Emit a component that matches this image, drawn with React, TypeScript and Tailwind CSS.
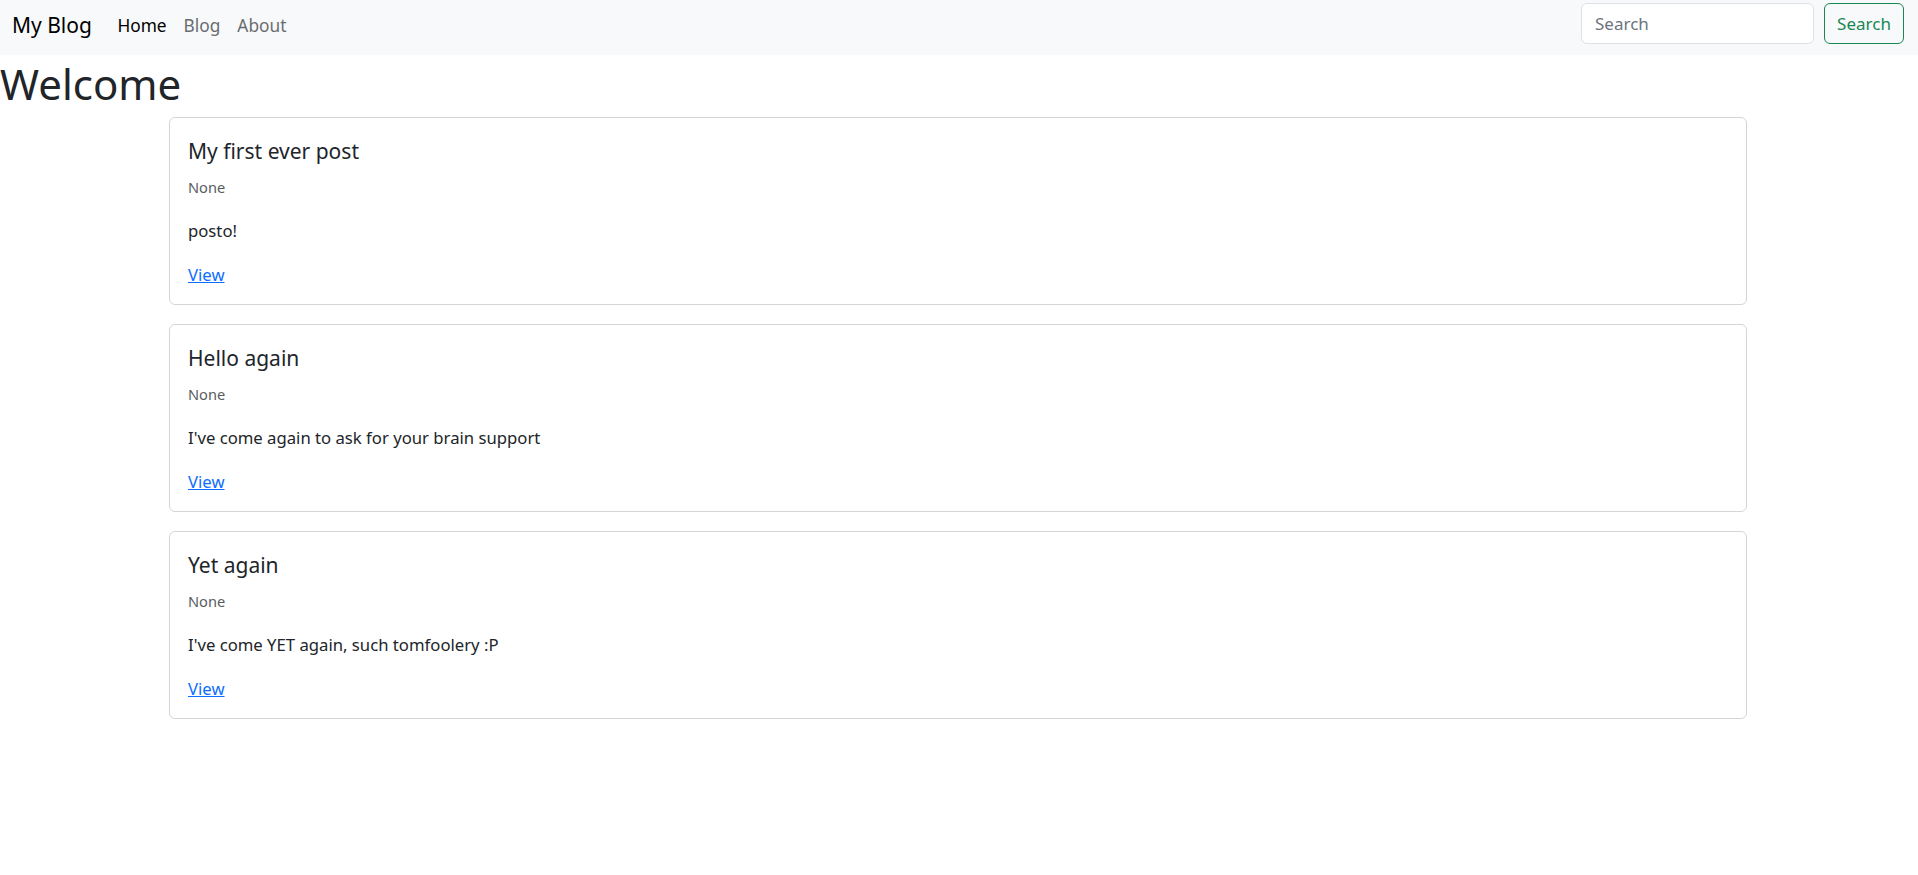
const posts = [
  { id: 1, title: "My first ever post", author: "None", body: "posto!" },
  {
    id: 2,
    title: "Hello again",
    author: "None",
    body: "I've come again to ask for your brain support",
  },
  {
    id: 3,
    title: "Yet again",
    author: "None",
    body: "I've come YET again, such tomfoolery :P",
  },
];

function Navbar() {
  return (
    <nav className="flex h-[55px] items-start bg-[#f8f9fa]">
      <a href="#" className="ml-[12px] mt-[10px] text-[21px] leading-[30px] text-black">
        My Blog
      </a>
      <ul className="ml-[17px] mt-[14px] flex text-[17.3px] leading-[24px]">
        <li>
          <a href="#" className="px-[8.5px] text-black">
            Home
          </a>
        </li>
        <li>
          <a href="#" className="px-[8.5px] text-[#6a6d70]">
            Blog
          </a>
        </li>
        <li>
          <a href="#" className="px-[8.5px] text-[#6a6d70]">
            About
          </a>
        </li>
      </ul>
      <form className="ml-auto mr-[14px] mt-[3px] flex gap-[10px]" onSubmit={(e) => e.preventDefault()}>
        <input
          type="search"
          placeholder="Search"
          className="h-[41px] w-[233px] rounded-[6px] border border-[#dee2e6] bg-white px-[13px] text-[17px] text-[#212529] placeholder:text-[#6c757d] focus:outline-none"
        />
        <button
          type="submit"
          className="h-[41px] w-[80px] rounded-[6px] border border-[#198754] text-[17px] text-[#198754]"
        >
          Search
        </button>
      </form>
    </nav>
  );
}

export default function App() {
  return (
    <div className="min-h-screen bg-white font-['Noto_Sans',sans-serif] text-[#212529]">
      <Navbar />
      <h1 className="mb-[8px] mt-[4px] text-[42px] leading-[50px]">Welcome</h1>
      <div className="ml-[169px] mr-[171px] flex flex-col gap-[19px]">
        {posts.map((post) => (
          <div
            key={post.id}
            className="flex flex-col rounded-[6px] border border-[#d5d5d5] px-[18px] pb-[17px] pt-[20px]"
          >
            <h5 className="text-[21px] leading-[26px]">{post.title}</h5>
            <h6 className="mt-[13px] text-[14.6px] leading-[20px] text-[#595c5f]">
              {post.author}
            </h6>
            <p className="mt-[22px] text-[16.7px] leading-[24px]">{post.body}</p>
            <a
              href="#"
              className="mt-[20px] self-start text-[16.7px] leading-[24px] text-[#0d6efd] underline"
            >
              View
            </a>
          </div>
        ))}
      </div>
    </div>
  );
}
